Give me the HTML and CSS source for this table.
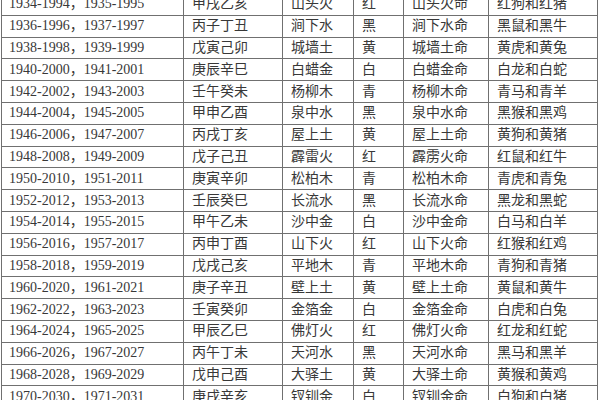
FILE: index.html
```html
<!DOCTYPE html>
<html lang="zh">
<head>
<meta charset="utf-8">
<link rel="stylesheet" href="styles.css">
</head>
<body>
<table class="nayin">
<colgroup>
<col class="c-year"><col class="c-gz"><col class="c-ny"><col class="c-color"><col class="c-ming"><col class="c-animal">
</colgroup>
<tbody>
<tr><td>1934-1994，1935-1995</td><td>甲戌乙亥</td><td>山头火</td><td>红</td><td>山头火命</td><td>红狗和红猪</td></tr>
<tr><td>1936-1996，1937-1997</td><td>丙子丁丑</td><td>涧下水</td><td>黑</td><td>涧下水命</td><td>黑鼠和黑牛</td></tr>
<tr><td>1938-1998，1939-1999</td><td>戊寅己卯</td><td>城墙土</td><td>黄</td><td>城墙土命</td><td>黄虎和黄兔</td></tr>
<tr><td>1940-2000，1941-2001</td><td>庚辰辛巳</td><td>白蜡金</td><td>白</td><td>白蜡金命</td><td>白龙和白蛇</td></tr>
<tr><td>1942-2002，1943-2003</td><td>壬午癸未</td><td>杨柳木</td><td>青</td><td>杨柳木命</td><td>青马和青羊</td></tr>
<tr><td>1944-2004，1945-2005</td><td>甲申乙酉</td><td>泉中水</td><td>黑</td><td>泉中水命</td><td>黑猴和黑鸡</td></tr>
<tr><td>1946-2006，1947-2007</td><td>丙戌丁亥</td><td>屋上土</td><td>黄</td><td>屋上土命</td><td>黄狗和黄猪</td></tr>
<tr><td>1948-2008，1949-2009</td><td>戊子己丑</td><td>霹雷火</td><td>红</td><td>霹雳火命</td><td>红鼠和红牛</td></tr>
<tr><td>1950-2010，1951-2011</td><td>庚寅辛卯</td><td>松柏木</td><td>青</td><td>松柏木命</td><td>青虎和青兔</td></tr>
<tr><td>1952-2012，1953-2013</td><td>壬辰癸巳</td><td>长流水</td><td>黑</td><td>长流水命</td><td>黑龙和黑蛇</td></tr>
<tr><td>1954-2014，1955-2015</td><td>甲午乙未</td><td>沙中金</td><td>白</td><td>沙中金命</td><td>白马和白羊</td></tr>
<tr><td>1956-2016，1957-2017</td><td>丙申丁酉</td><td>山下火</td><td>红</td><td>山下火命</td><td>红猴和红鸡</td></tr>
<tr><td>1958-2018，1959-2019</td><td>戊戌己亥</td><td>平地木</td><td>青</td><td>平地木命</td><td>青狗和青猪</td></tr>
<tr><td>1960-2020，1961-2021</td><td>庚子辛丑</td><td>壁上土</td><td>黄</td><td>壁上土命</td><td>黄鼠和黄牛</td></tr>
<tr><td>1962-2022，1963-2023</td><td>壬寅癸卯</td><td>金箔金</td><td>白</td><td>金箔金命</td><td>白虎和白兔</td></tr>
<tr><td>1964-2024，1965-2025</td><td>甲辰乙巳</td><td>佛灯火</td><td>红</td><td>佛灯火命</td><td>红龙和红蛇</td></tr>
<tr><td>1966-2026，1967-2027</td><td>丙午丁未</td><td>天河水</td><td>黑</td><td>天河水命</td><td>黑马和黑羊</td></tr>
<tr><td>1968-2028，1969-2029</td><td>戊申己酉</td><td>大驿土</td><td>黄</td><td>大驿土命</td><td>黄猴和黄鸡</td></tr>
<tr><td>1970-2030，1971-2031</td><td>庚戌辛亥</td><td>钗钏金</td><td>白</td><td>钗钏金命</td><td>白狗和白猪</td></tr>
</tbody>
</table>
</body>
</html>
```
FILE: styles.css
```css
html, body {
  margin: 0;
  padding: 0;
  background: #fff;
  overflow: hidden;
}
body {
  width: 600px;
  height: 400px;
}
.nayin {
  border-collapse: collapse;
  table-layout: fixed;
  width: 596px;
  margin: -7px 0 0 1px;
  font-family: "Liberation Serif", "Noto Sans CJK SC", serif;
  font-size: 14px;
  color: #383838;
}
.c-year { width: 182px; }
.c-gz { width: 99px; }
.c-ny { width: 71px; }
.c-color { width: 50px; }
.c-ming { width: 85px; }
.c-animal { width: 109px; }
.nayin td {
  border: 1px solid #707070;
  height: 21.8px;
  padding: 0 0 0 8px;
  box-sizing: border-box;
  white-space: nowrap;
  line-height: 20px;
  vertical-align: middle;
}
.nayin td:first-child {
  padding-left: 7px;
}
```
